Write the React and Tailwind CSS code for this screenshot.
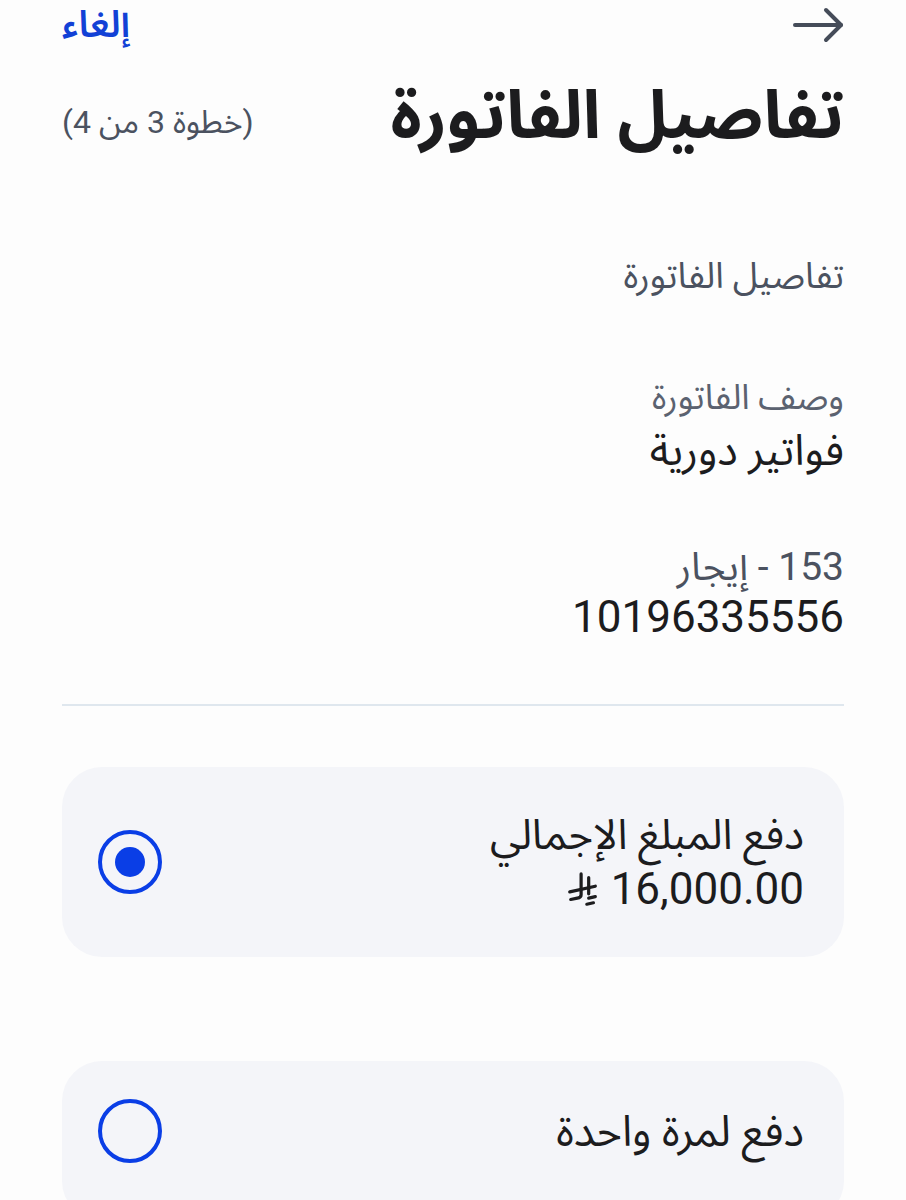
import { useState } from "react";

const font = { fontFamily: 'Roboto, "Noto Sans Arabic", "Noto Sans", "DejaVu Sans", sans-serif' };

// new saudi riyal sign, drawn since fonts don't have it yet
const RiyalIcon = () => (
  <svg width="32" height="36" viewBox="6 2 32 38" fill="none" stroke="#1c1c1e" strokeWidth="3.4" strokeLinecap="round" strokeLinejoin="round">
    <path d="M20 4 V26 Q20 29 16 29.6 L9 31" />
    <path d="M28 8 V25" />
    <path d="M8 23 L35 17" />
    <path d="M28 29.5 L35 28" />
    <path d="M26 36 L33 34.5" />
  </svg>
);

const Radio = ({ checked }) => (
  <div className="w-[64px] h-[64px] rounded-full border-[4px] border-[#0a3ee6] flex items-center justify-center shrink-0">
    {checked && <div className="w-[30px] h-[30px] rounded-full bg-[#0a3ee6]" />}
  </div>
);

const App = () => {
  const [option, setOption] = useState("full");

  return (
    <div dir="rtl" style={font} className="min-h-screen bg-[#fdfdfd] px-[62px] text-[#1c1c1e]">

      <div className="flex justify-between items-center h-[50px]">
        <svg width="54" height="38" viewBox="0 0 54 38" fill="none" stroke="#454c59" strokeWidth="4" strokeLinecap="round" strokeLinejoin="round" className="-mr-[2px]">
          <path d="M3 19 H49" />
          <path d="M34 4 L49 19 L34 34" />
        </svg>
        <button className="text-[#1241d6] text-[37px] font-semibold leading-[50px]">
          إلغاء
        </button>
      </div>

      <div className="flex justify-between items-center mt-[30px]">
        <h1 className="text-[67px] font-bold leading-[70px]">
          تفاصيل الفاتورة
        </h1>
        <span className="text-[32px] text-[#4b5260] leading-[40px] mt-[14px]">
          (خطوة 3 من 4)
        </span>
      </div>

      <div className="mt-[106px] text-[36px] text-[#4b5260] leading-[40px]">
        تفاصيل الفاتورة
      </div>

      <div className="mt-[82px]">
        <div className="text-[35px] text-[#5b6270] leading-[40px]">
          وصف الفاتورة
        </div>
        <div className="text-[43px] leading-[48px] mt-[8px]">
          فواتير دورية
        </div>
      </div>

      <div className="mt-[71px]">
        <div className="text-[39px] text-[#4b5260] leading-[44px]">
          153 - إيجار
        </div>
        <div className="text-[44px] leading-[48px] mt-[4px]">
          10196335556
        </div>
      </div>

      <div className="h-[2px] bg-[#dfe7ee] mt-[63px]" />

      <div
        onClick={() => setOption("full")}
        className="mt-[61px] h-[190px] rounded-[40px] bg-[#f4f5f9] flex items-center justify-between pr-[40px] pl-[36px] cursor-pointer"
      >
        <div>
          <div className="text-[42px] leading-[55px]">
            دفع المبلغ الإجمالي
          </div>
          <div className="flex items-center gap-[12px] text-[44px] leading-[55px]">
            <span>16,000.00</span>
            <RiyalIcon />
          </div>
        </div>
        <Radio checked={option === "full"} />
      </div>

      <div
        onClick={() => setOption("once")}
        className="mt-[104px] h-[160px] pb-[20px] rounded-[40px] bg-[#f4f5f9] flex items-center justify-between pr-[40px] pl-[36px] cursor-pointer"
      >
        <div className="text-[43px] leading-[55px]">
          دفع لمرة واحدة
        </div>
        <Radio checked={option === "once"} />
      </div>

    </div>
  );
};

export default App;
